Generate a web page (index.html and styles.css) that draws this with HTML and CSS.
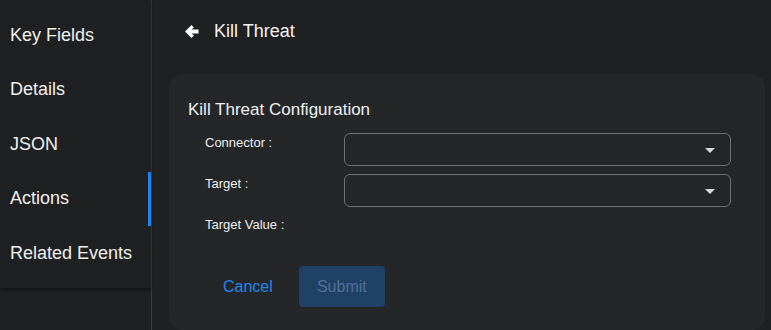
FILE: index.html
```html
<!DOCTYPE html>
<html>
<head>
<meta charset="utf-8">
<link rel="stylesheet" href="styles.css">
</head>
<body>
<div class="app">
  <nav class="sidebar">
    <ul class="nav-list">
      <li class="nav-item">Key Fields</li>
      <li class="nav-item">Details</li>
      <li class="nav-item">JSON</li>
      <li class="nav-item active">Actions</li>
      <li class="nav-item">Related Events</li>
    </ul>
  </nav>
  <main class="main">
    <header class="header">
      <svg class="back" width="14" height="13" viewBox="0 0 14 13"><path d="M6.5 0 L8.9 2.4 L6.6 4.6 H13.5 V8.4 H6.6 L8.9 10.6 L6.5 13 L0 6.5 Z" fill="#ffffff"/></svg>
      <span class="title">Kill Threat</span>
    </header>
    <section class="card">
      <h2 class="card-title">Kill Threat Configuration</h2>
      <div class="form">
        <div class="row">
          <label class="label">Connector :</label>
          <div class="select"><span class="caret"></span></div>
        </div>
        <div class="row">
          <label class="label">Target :</label>
          <div class="select"><span class="caret"></span></div>
        </div>
        <div class="row">
          <label class="label">Target Value :</label>
        </div>
      </div>
      <div class="actions">
        <button class="btn-cancel">Cancel</button>
        <button class="btn-submit">Submit</button>
      </div>
    </section>
  </main>
</div>
</body>
</html>
```
FILE: styles.css
```css
* { box-sizing: border-box; }
html, body { margin: 0; padding: 0; }
body {
  background: #1f2022;
  font-family: "Liberation Sans", Arial, sans-serif;
  color: #f2f2f2;
  width: 771px;
  height: 330px;
  overflow: hidden;
}
.app {
  display: flex;
  height: 330px;
}
.sidebar {
  width: 152px;
  flex: none;
  border-right: 1px solid #3b3c3f;
  background: #1f2022;
}
.nav-list {
  list-style: none;
  margin: 0;
  padding: 8px 0 7px;
  background: #1f2022;
  box-shadow: 0 2px 3px rgba(0,0,0,0.45);
}
.nav-item {
  height: 54.5px;
  display: flex;
  align-items: center;
  padding-left: 10px;
  font-size: 18px;
  color: #f0f0f0;
  border-right: 3px solid transparent;
}
.nav-item.active {
  border-right-color: #1a86f0;
}
.main {
  flex: 1;
  padding: 0 6px 0 17px;
  display: flex;
  flex-direction: column;
}
.header {
  height: 74px;
  display: flex;
  align-items: flex-start;
  padding-top: 21px;
  padding-left: 16px;
  gap: 15px;
}
.back { margin-top: 4px; }
.title {
  font-size: 18px;
  color: #f4f4f4;
}
.card {
  flex: 1;
  background: #252628;
  border-radius: 14px;
  padding: 26px 34px 0 19px;
}
.card-title {
  margin: 0;
  font-size: 17px;
  font-weight: normal;
  color: #f0f0f0;
  line-height: 20px;
}
.form {
  margin-top: 13px;
  display: flex;
  flex-direction: column;
  gap: 8px;
}
.row {
  display: flex;
  align-items: flex-start;
  height: 33px;
}
.label {
  width: 156px;
  padding-left: 17px;
  font-size: 13px;
  color: #eeeeee;
  line-height: 15px;
  margin-top: 2px;
}
.select {
  flex: 1;
  height: 33px;
  border: 1px solid #6e6f72;
  border-radius: 6px;
  position: relative;
}
.caret {
  position: absolute;
  right: 15px;
  top: 14px;
  width: 0;
  height: 0;
  border-left: 5px solid transparent;
  border-right: 5px solid transparent;
  border-top: 5px solid #d8d8d8;
}
.actions {
  margin-top: 18px;
  display: flex;
  align-items: center;
  gap: 15px;
  padding-left: 16px;
}
.btn-cancel {
  background: none;
  border: none;
  font-family: inherit;
  font-size: 16px;
  color: #1e88f0;
  padding: 0 11px 0 19px;
  height: 41px;
}
.btn-submit {
  background: #1f4166;
  border: none;
  border-radius: 4px;
  font-family: inherit;
  font-size: 16px;
  color: #52709a;
  width: 86px;
  height: 41px;
}
```
